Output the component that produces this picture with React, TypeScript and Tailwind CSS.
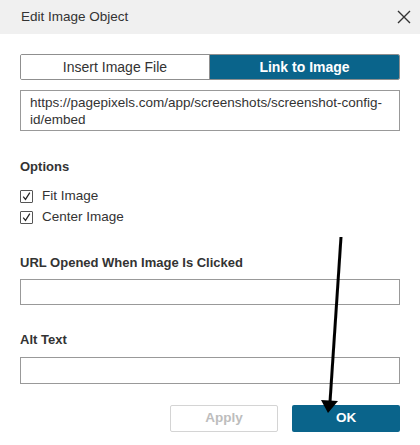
import React from 'react';

const Check = () => (
    <span className="w-[13px] h-[13px] border border-[#555] rounded-[1px] flex items-center justify-center bg-white">
        <svg width="11" height="11" viewBox="0 0 11 11">
            <path d="M2.2 5.6 L4.5 8.4 L8.8 1.6" fill="none" stroke="#222" strokeWidth="1.2" />
        </svg>
    </span>
);

const App = () => {
    return (
        <div className="relative w-[420px] h-[445px] bg-white text-[#222] font-['Liberation_Sans',Arial,sans-serif]">
            <div className="h-[34px] bg-[#f0f0f0] flex items-center justify-between pl-[21px] pr-[8px]">
                <span className="text-[13.5px] text-[#333]">Edit Image Object</span>
                <svg width="16" height="16" viewBox="0 0 16 16">
                    <path d="M2 2 L14 14 M14 2 L2 14" stroke="#333" strokeWidth="1.4" />
                </svg>
            </div>
            <div className="px-5">
                <div className="mt-[20px] h-[26px] flex rounded-[2px] overflow-hidden border border-[#8f8f8f]">
                    <div className="w-[189px] flex items-center justify-center text-[14px] text-[#333] bg-white border-r border-[#8f8f8f]">
                        Insert Image File
                    </div>
                    <div className="flex-1 flex items-center justify-center text-[14px] font-bold text-white bg-[#0a648b]">
                        Link to Image
                    </div>
                </div>
                <div className="mt-[10px] h-[41px] border border-[#999] pl-[9px] pr-[4px] pt-[3px] text-[13.5px] leading-[17px] text-[#333]">
                    https://pagepixels.com/app/screenshots/screenshot-config-id/embed
                </div>
                <div className="mt-[28px] text-[13px] leading-[16px] font-bold text-[#333]">Options</div>
                <div className="mt-[13px] flex items-center gap-[9px] h-[16px] text-[13.5px] text-[#333]">
                    <Check />
                    <span>Fit Image</span>
                </div>
                <div className="mt-[5px] flex items-center gap-[9px] h-[16px] text-[13.5px] text-[#333]">
                    <Check />
                    <span>Center Image</span>
                </div>
                <div className="mt-[30px] text-[13px] leading-[16px] font-bold text-[#333]">URL Opened When Image Is Clicked</div>
                <div className="mt-[8px] h-[26px] border border-[#999]" />
                <div className="mt-[27px] text-[13px] leading-[16px] font-bold text-[#333]">Alt Text</div>
                <div className="mt-[9px] h-[27px] border border-[#999]" />
                <div className="mt-[21px] flex justify-end gap-[14px]">
                    <button className="w-[108px] h-[27px] border border-[#d4d4d4] rounded-[2px] bg-white text-[13.5px] font-bold text-[#bdbdbd]">
                        Apply
                    </button>
                    <button className="w-[108px] h-[27px] rounded-[2px] bg-[#0a648b] text-[13.5px] font-bold text-white">
                        OK
                    </button>
                </div>
            </div>
            <svg className="absolute left-0 top-0 pointer-events-none" width="420" height="445" viewBox="0 0 420 445">
                <path d="M341 237 L330 402" stroke="#000" strokeWidth="3" />
                <path d="M321 400 L338 401 L328 413 Z" fill="#000" />
            </svg>
        </div>
    );
};

export default App;
